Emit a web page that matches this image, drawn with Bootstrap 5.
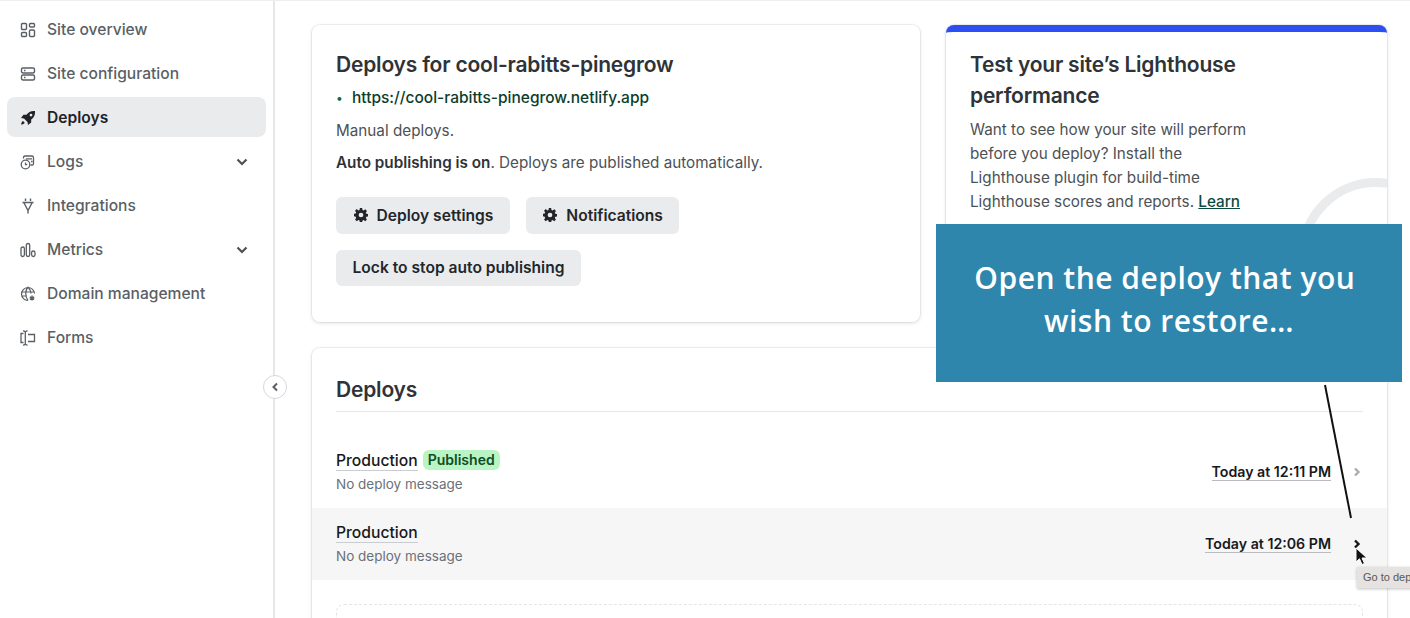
<!DOCTYPE html>
<html lang="en"><head><meta charset="utf-8"><title>Deploys</title>
<link href="https://cdn.jsdelivr.net/npm/bootstrap@5.3.0/dist/css/bootstrap.min.css" rel="stylesheet">
<style>
html,body{height:618px;overflow:hidden;background:#fff}
body{font-family:Inter,"Liberation Sans",sans-serif;font-size:15.25px;color:#4d5156;position:relative;border-top:1px solid #eee}
.side{width:275px;height:617px;border-right:2px solid #e6e7e9;padding:8px 7px 0 7px;flex:none;position:relative}
.sitem{height:40px;margin-bottom:4px;padding:2px 18px 0 13px;border-radius:8px;font-weight:500;color:#5a5f66;font-size:15.6px}
.sitem svg.ic{width:16px;height:16px;margin-right:11px;flex:none}
.sitem.on{background:#e9ebed;color:#1f2328;font-weight:600}
.collapse-btn{position:absolute;left:263px;top:374px;width:24px;height:24px;border:1px solid #d5d7da;border-radius:50%;background:#fff}
.mainarea{padding:24px 22px 0 37px;width:1135px}
.pnl{background:#fff;border-radius:8px;box-shadow:0 0 0 1px rgba(0,0,0,.05),0 1px 4px rgba(0,0,0,.12)}
.pnl-a{width:608px;height:297px;padding:24px}
.pnl-b{width:441px;height:297px;padding:17px 24px 0;margin-left:26px;position:relative;overflow:hidden;border-top:7px solid #2d4ef0}
.ttl{font-size:21px;font-weight:600;color:#2f3337;line-height:31px;margin:0;letter-spacing:-.2px}
.para{line-height:24px;margin:8px 0 0;font-size:15.25px}
.lnk{color:#0b3d2c;font-weight:500;font-size:15.5px}
.gbtn{background:#e9ebed;color:#22262a;border:0;border-radius:6px;font-weight:600;font-size:15.6px;height:37px;padding:0 16.500px;line-height:37px}
.gbtn svg{width:14px;height:14px;margin-right:9px;margin-left:1px;vertical-align:-1px}
.gbtn.lockb{height:36px;line-height:36px;margin-top:16px}
.learn{color:#0b4a40;font-weight:500;text-decoration:underline}
.gauge{position:absolute;left:352px;top:146px;width:156px;height:156px;border:9px solid #e9ebed;border-radius:50%}
.pnl-c{width:1075px;height:400px;margin-top:26px;padding:25px 0 0}
.hd{margin:0 24px;border-bottom:1px solid #e6e7e9;height:39px;font-size:21px;font-weight:600;color:#2f3337;line-height:34px;letter-spacing:-.2px}
.drow{height:72px;padding:0 26px 0 24px}
.drow.hov{background:#f6f6f7}
.dname{color:#16191c;font-weight:500;font-size:15.7px;line-height:19px;border-bottom:1px solid #c9ccd0;display:inline-block}
.dmsg{color:#6b7178;font-size:13.5px;line-height:20px;margin-top:1px}
.pub{background:#b9f5c4;color:#0f4d24;font-weight:600;font-size:14px;line-height:20px;padding:0 5px;border-radius:6px;margin-left:5px;display:inline-block;vertical-align:1px}
.dtime{color:#16191c;font-weight:600;font-size:14.200px;line-height:17px;border-bottom:1px solid #b9bcc0}
.chev{margin-left:22px}
.dash{height:60px;margin:24px 24px 0;border:1px dashed #e4e5e7;border-radius:8px}
.callout{position:absolute;left:936px;top:223px;width:466px;height:158px;background:#2e86ad;color:#fff;font-family:"Open Sans",sans-serif;font-size:30px;font-weight:600;line-height:43px;text-align:center;padding-top:32px;letter-spacing:.5px}
.arrowline{position:absolute;left:1320px;top:380px;width:40px;height:140px}
.tip{position:absolute;left:1357px;top:566px;width:80px;height:21px;background:#e5e2df;color:#5a5856;font-size:11px;line-height:21px;padding-left:6px;white-space:nowrap;box-shadow:0 1px 3px rgba(0,0,0,.25);font-family:"Liberation Sans",sans-serif}
.cursor{position:absolute;left:1355px;top:546px;width:13px;height:19px}
</style></head><body>
<div class="d-flex">
<aside class="side">
<div class="sitem d-flex align-items-center"><svg class="ic" viewBox="0 0 16 16" fill="none" stroke="currentColor" stroke-width="1.400"><rect x="1.500" y="1.500" width="5" height="6" rx="1"/><rect x="9.500" y="1.500" width="5" height="3.500" rx="1"/><rect x="1.500" y="10.500" width="5" height="4" rx="1"/><rect x="9.500" y="8" width="5" height="6.500" rx="1"/></svg>Site overview</div>
<div class="sitem d-flex align-items-center"><svg class="ic" viewBox="0 0 16 16" fill="none" stroke="currentColor" stroke-width="1.400"><rect x="1.500" y="2" width="13" height="5" rx="1.500"/><rect x="1.500" y="9" width="13" height="5" rx="1.500"/><path d="M4 4.500h1.500M4 11.500h1.500"/></svg>Site configuration</div>
<div class="sitem on d-flex align-items-center"><svg class="ic" viewBox="0 0 16 16" fill="currentColor"><path d="M15 1c-4-.3-6.600 1-8.500 3.800H3.500L1 8l3 .5 3.500 3.500.5 3 3.200-2.500V9.500C14 7.600 15.300 5 15 1zm-4 5.500a1.400 1.400 0 1 1 0-2.800 1.400 1.400 0 0 1 0 2.800z"/><path d="M3 11c-1.200.6-1.700 2-1.800 3.500 1.500-.1 2.900-.6 3.500-1.800z"/></svg>Deploys</div>
<div class="sitem d-flex align-items-center"><svg class="ic" viewBox="0 0 16 16" fill="none" stroke="currentColor" stroke-width="1.300"><circle cx="5.500" cy="10.500" r="4.300"/><path d="M5.500 8.500v2.200h1.800M3.500 4.500V3.300c0-.8.600-1.300 1.300-1.300h7c1 0 1.700.7 1.700 1.700v6c0 .8-.6 1.300-1.300 1.300h-1.700M6 4.800h6M11 7.500h1.500"/></svg><span class="flex-grow-1">Logs</span><svg width="12" height="8" viewBox="0 0 12 8" fill="none" stroke="#4d5156" stroke-width="2.200"><path d="M1.500 1.500 6 6l4.500-4.500"/></svg></div>
<div class="sitem d-flex align-items-center"><svg class="ic" viewBox="0 0 16 16" fill="none" stroke="currentColor" stroke-width="1.400"><path d="M5.500 .5v2.500M10.500 .5v2.500M2.500 4.500h11M3.800 4.500 8 12.500l4.200-8M8 12.500v3"/></svg>Integrations</div>
<div class="sitem d-flex align-items-center"><svg class="ic" viewBox="0 0 16 16" fill="none" stroke="currentColor" stroke-width="1.300"><rect x="1" y="5" width="3.400" height="9.500" rx="1.700"/><rect x="6.300" y="1.500" width="3.400" height="13" rx="1.700"/><rect x="11.600" y="9" width="3.400" height="5.500" rx="1.700"/></svg><span class="flex-grow-1">Metrics</span><svg width="12" height="8" viewBox="0 0 12 8" fill="none" stroke="#4d5156" stroke-width="2.200"><path d="M1.500 1.500 6 6l4.500-4.500"/></svg></div>
<div class="sitem d-flex align-items-center"><svg class="ic" viewBox="0 0 16 16" fill="none" stroke="currentColor" stroke-width="1.200"><path d="M14.500 7.500a6.500 6.500 0 1 0-6.500 7M1.500 6h13M1.800 10h5M8 1C5 4.500 5 10.500 8 14.500M8 1c2 2.300 2.900 4.500 3 6.500"/><path d="M12 9.500v5M9.800 10.800l4.400 2.500M14.200 10.800l-4.400 2.500" stroke-width="1.400"/></svg>Domain management</div>
<div class="sitem d-flex align-items-center"><svg class="ic" viewBox="0 0 16 16" fill="none" stroke="currentColor" stroke-width="1.300"><path d="M3.500 3.500H1v9h2.500M8 4.500h6.500v7H8M3 .8c1 0 1.800.4 2.300 1 .5-.6 1.300-1 2.300-1M3 15.200c1 0 1.800-.4 2.300-1 .5.600 1.300 1 2.300 1M5.300 1.800v12.400"/></svg>Forms</div>
<div class="collapse-btn d-flex align-items-center justify-content-center"><svg width="8" height="10" viewBox="0 0 8 10" fill="none" stroke="#5a5f66" stroke-width="2"><path d="M6 1.500 2.500 5 6 8.500"/></svg></div>
</aside>
<main class="mainarea">
<div class="d-flex">
<section class="pnl pnl-a">
<h2 class="ttl">Deploys for cool-rabitts-pinegrow</h2>
<div class="d-flex align-items-center" style="margin-top:6px;line-height:24px"><span style="color:#0f6b3a;font-size:12px;width:16px">•</span><a class="lnk text-decoration-none" href="#">https://cool-rabitts-pinegrow.netlify.app</a></div>
<p class="para" style="margin-top:9px">Manual deploys.</p>
<p class="para"><span class="fw-semibold" style="color:#2f3337">Auto publishing is on</span>. Deploys are published automatically.</p>
<div class="d-flex gap-3" style="margin-top:22px">
<button class="gbtn"><svg viewBox="0 0 16 16" fill="currentColor"><path fill-rule="evenodd" d="M6.700 0h2.600l.4 2.200 1.300.6 1.900-1.300 1.900 1.900-1.300 1.900.6 1.300 2.200.4v2.600l-2.200.4-.6 1.300 1.300 1.900-1.900 1.900-1.900-1.300-1.300.6-.4 2.200H6.700l-.4-2.200-1.300-.6-1.900 1.300-1.900-1.900 1.300-1.900-.6-1.300L-.3 9.300V6.700l2.200-.4.6-1.300-1.300-1.900 1.900-1.900L5 2.800l1.300-.6zM8 5.300a2.700 2.700 0 1 0 0 5.400 2.700 2.700 0 0 0 0-5.400z"/></svg>Deploy settings</button>
<button class="gbtn"><svg viewBox="0 0 16 16" fill="currentColor"><path fill-rule="evenodd" d="M6.700 0h2.600l.4 2.200 1.300.6 1.900-1.300 1.900 1.900-1.300 1.900.6 1.300 2.200.4v2.600l-2.200.4-.6 1.300 1.300 1.900-1.900 1.900-1.900-1.300-1.300.6-.4 2.200H6.700l-.4-2.200-1.300-.6-1.900 1.300-1.900-1.900 1.300-1.900-.6-1.300L-.3 9.300V6.700l2.200-.4.6-1.300-1.300-1.900 1.900-1.900L5 2.800l1.300-.6zM8 5.300a2.700 2.700 0 1 0 0 5.400 2.700 2.700 0 0 0 0-5.400z"/></svg>Notifications</button>
</div>
<button class="gbtn lockb d-block">Lock to stop auto publishing</button>
</section>
<section class="pnl pnl-b">
<div class="gauge"></div>
<h2 class="ttl position-relative" style="width:300px">Test your site’s Lighthouse performance</h2>
<p class="para position-relative" style="width:280px;margin-top:7px">Want to see how your site will perform before you deploy? Install the Lighthouse plugin for build-time Lighthouse scores and reports. <a href="#" class="learn">Learn</a></p>
</section>
</div>
<section class="pnl pnl-c">
<div class="hd">Deploys</div>
<div style="height:24px"></div>
<div class="drow d-flex align-items-center justify-content-between">
<div><div><span class="dname">Production</span><span class="pub">Published</span></div><div class="dmsg">No deploy message</div></div>
<div class="d-flex align-items-center"><span class="dtime">Today at 12:11 PM</span><svg class="chev" width="8" height="10" viewBox="0 0 8 10" fill="none" stroke="#a9adb2" stroke-width="2.400"><path d="M2 1.500 5.500 5 2 8.500"/></svg></div>
</div>
<div class="drow hov d-flex align-items-center justify-content-between">
<div><div><span class="dname">Production</span></div><div class="dmsg">No deploy message</div></div>
<div class="d-flex align-items-center"><span class="dtime">Today at 12:06 PM</span><svg class="chev" width="8" height="10" viewBox="0 0 8 10" fill="none" stroke="#16191c" stroke-width="2.400"><path d="M2 1.500 5.500 5 2 8.500"/></svg></div>
</div>
<div class="dash"></div>
</section>
</main>
</div>
<div class="callout">Open the deploy that you&nbsp;<br>wish to restore…</div>
<svg class="arrowline" viewBox="0 0 40 140"><line x1="5" y1="4" x2="31" y2="137" stroke="#111" stroke-width="2"/></svg>
<div class="tip">Go to deploy</div>
<svg class="cursor" viewBox="0 0 13 19"><path d="M1 1v14l3.500-3.200 2.500 5.700 2.500-1-2.500-5.500H12z" fill="#111" stroke="#fff" stroke-width="1"/></svg>
</body></html>
